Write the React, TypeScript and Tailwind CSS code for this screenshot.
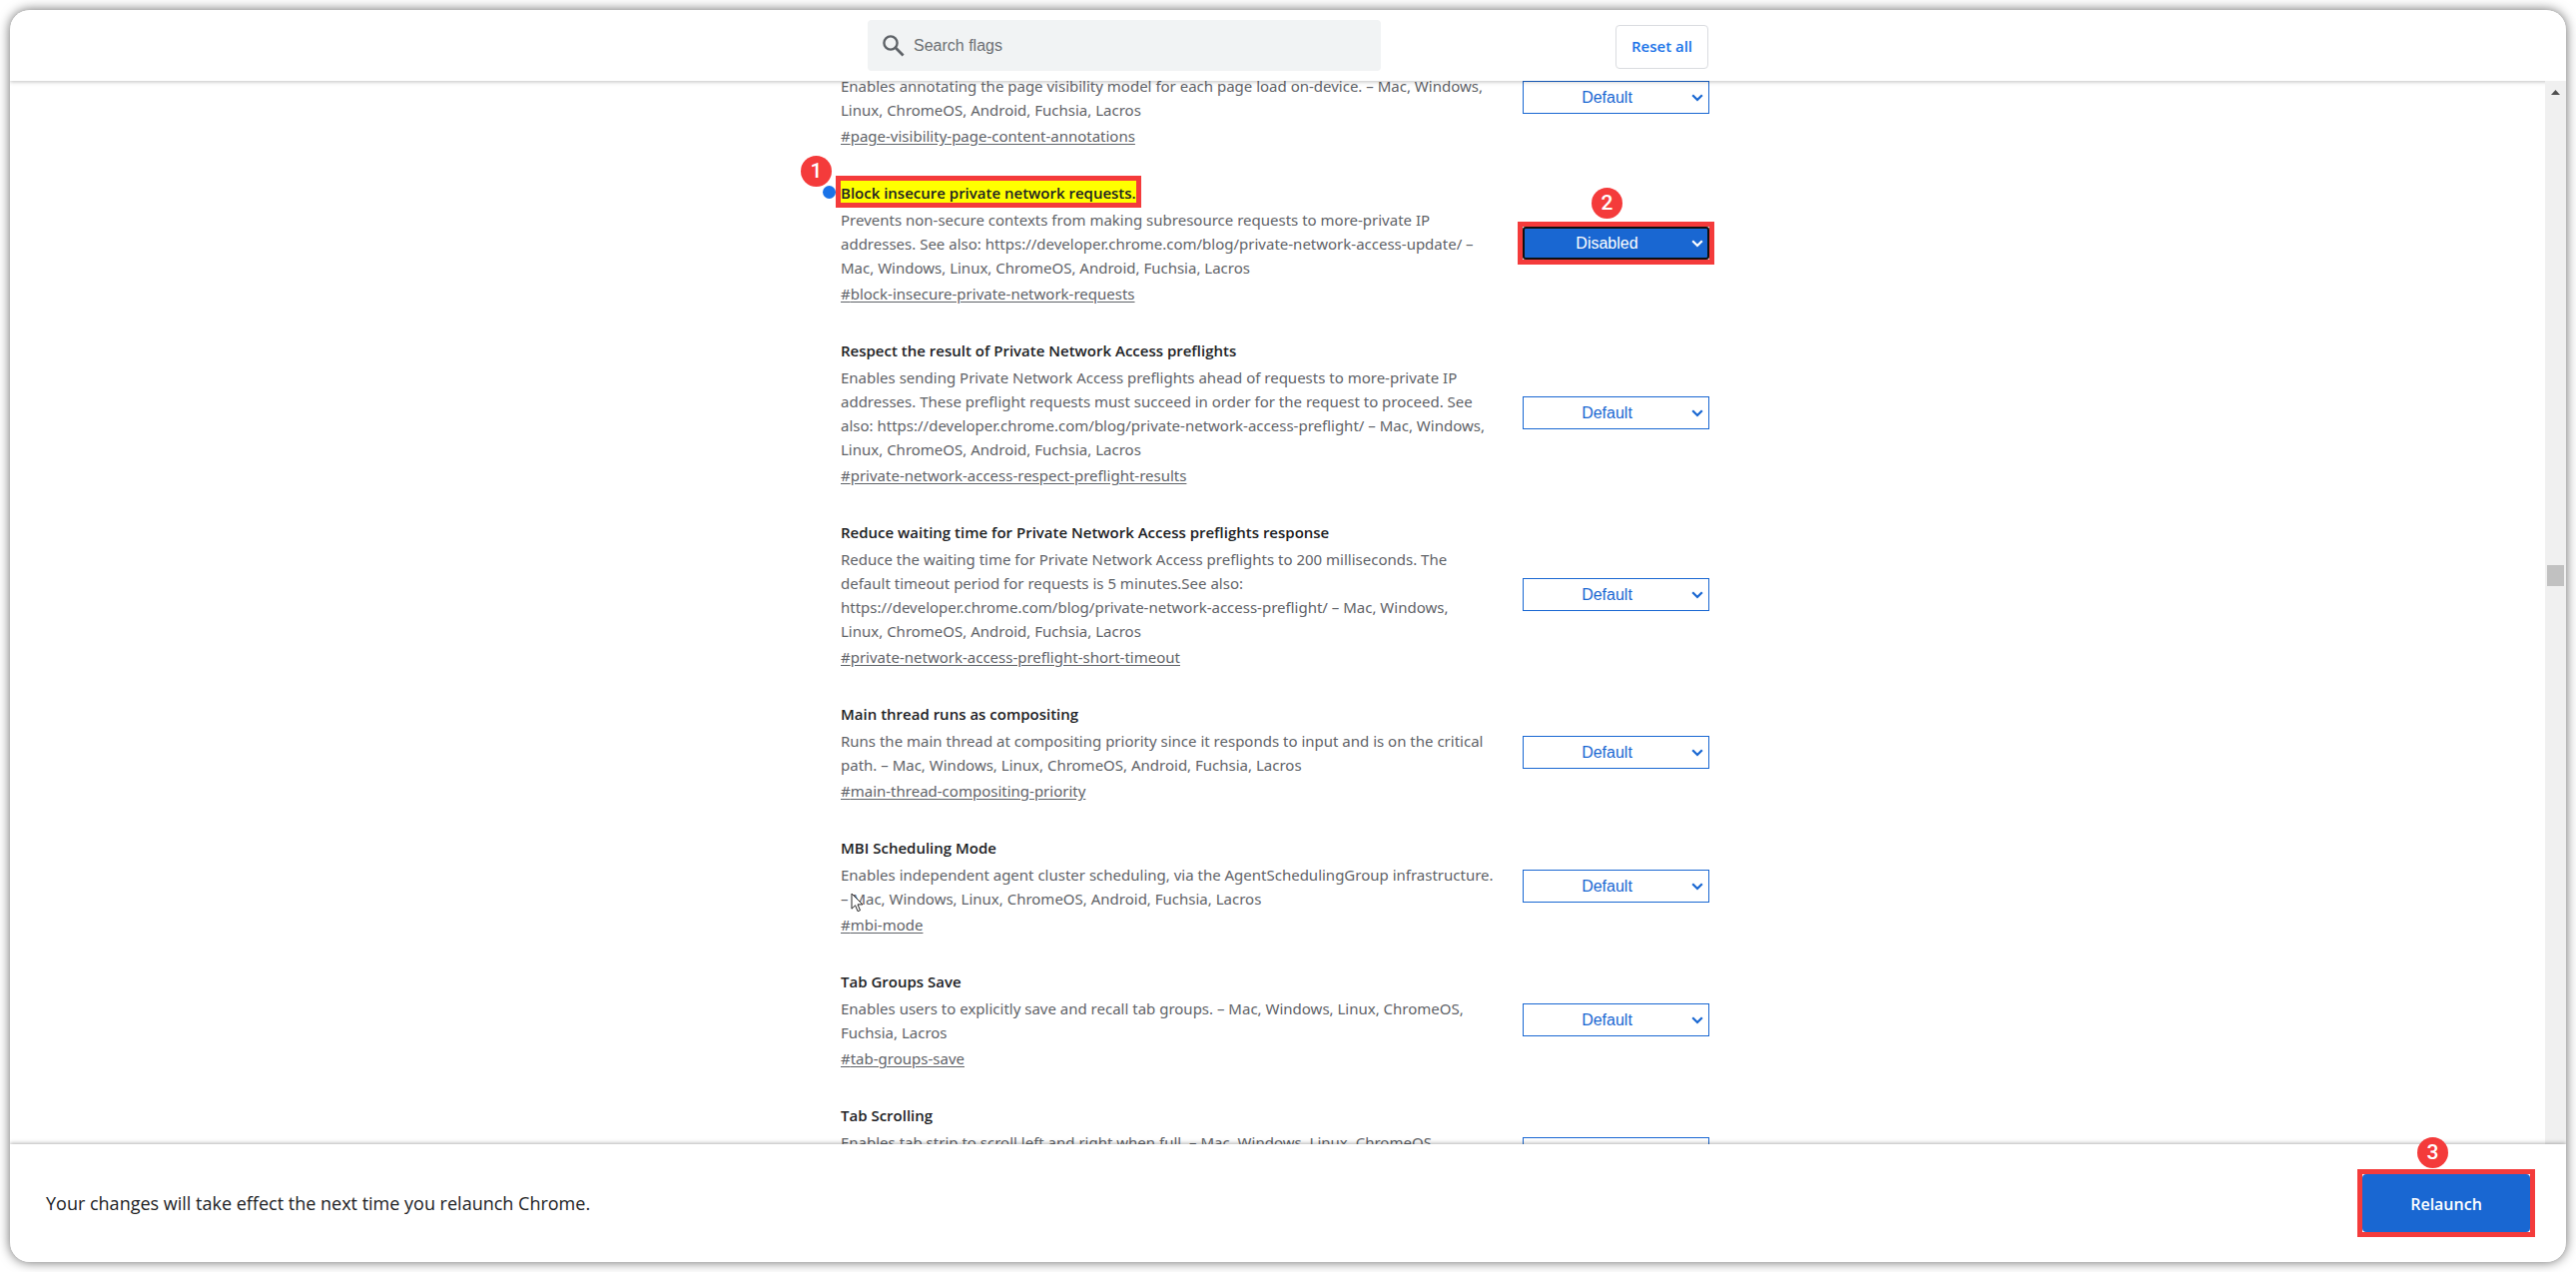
import React from "react";

type Flag = {
  id: string;
  title?: string;
  lines: string[];
  disabled?: boolean;
  pointer?: boolean;
};

const flags: Flag[] = [
  {
    id: "page-visibility-page-content-annotations",
    lines: [
      "Enables annotating the page visibility model for each page load on-device. – Mac, Windows,",
      "Linux, ChromeOS, Android, Fuchsia, Lacros",
    ],
  },
  {
    id: "block-insecure-private-network-requests",
    title: "Block insecure private network requests.",
    lines: [
      "Prevents non-secure contexts from making subresource requests to more-private IP",
      "addresses. See also: https://developer.chrome.com/blog/private-network-access-update/ –",
      "Mac, Windows, Linux, ChromeOS, Android, Fuchsia, Lacros",
    ],
    disabled: true,
  },
  {
    id: "private-network-access-respect-preflight-results",
    title: "Respect the result of Private Network Access preflights",
    lines: [
      "Enables sending Private Network Access preflights ahead of requests to more-private IP",
      "addresses. These preflight requests must succeed in order for the request to proceed. See",
      "also: https://developer.chrome.com/blog/private-network-access-preflight/ – Mac, Windows,",
      "Linux, ChromeOS, Android, Fuchsia, Lacros",
    ],
  },
  {
    id: "private-network-access-preflight-short-timeout",
    title: "Reduce waiting time for Private Network Access preflights response",
    lines: [
      "Reduce the waiting time for Private Network Access preflights to 200 milliseconds. The",
      "default timeout period for requests is 5 minutes.See also:",
      "https://developer.chrome.com/blog/private-network-access-preflight/ – Mac, Windows,",
      "Linux, ChromeOS, Android, Fuchsia, Lacros",
    ],
  },
  {
    id: "main-thread-compositing-priority",
    title: "Main thread runs as compositing",
    lines: [
      "Runs the main thread at compositing priority since it responds to input and is on the critical",
      "path. – Mac, Windows, Linux, ChromeOS, Android, Fuchsia, Lacros",
    ],
  },
  {
    id: "mbi-mode",
    title: "MBI Scheduling Mode",
    lines: [
      "Enables independent agent cluster scheduling, via the AgentSchedulingGroup infrastructure.",
      "– Mac, Windows, Linux, ChromeOS, Android, Fuchsia, Lacros",
    ],
    pointer: true,
  },
  {
    id: "tab-groups-save",
    title: "Tab Groups Save",
    lines: [
      "Enables users to explicitly save and recall tab groups. – Mac, Windows, Linux, ChromeOS,",
      "Fuchsia, Lacros",
    ],
  },
  {
    id: "scrollable-tabstrip",
    title: "Tab Scrolling",
    lines: [
      "Enables tab strip to scroll left and right when full. – Mac, Windows, Linux, ChromeOS,",
      "Fuchsia, Lacros",
    ],
  },
];

function Badge({ n, className }: { n: number; className: string }) {
  return (
    <span
      className={`absolute flex size-[31px] items-center justify-center rounded-full bg-[#f43b3b] font-['Roboto',sans-serif] text-[21px] leading-none font-medium text-white ${className}`}
    >
      {n}
    </span>
  );
}

function Outline() {
  return <span className="pointer-events-none absolute -inset-[5px] border-5 border-[#f43b3b]" />;
}

function Pointer() {
  return (
    <svg className="absolute top-[30px] left-[10px] h-[20px] w-[13px]" viewBox="0 0 13 20" aria-hidden="true">
      <path
        d="M1 1v15.2l3.6-3.4 2.5 5.9 2.4-1-2.5-5.8h5z"
        fill="#fff"
        stroke="#222"
        strokeWidth="1"
        strokeLinejoin="miter"
      />
    </svg>
  );
}

function StateSelect({ flag }: { flag: Flag }) {
  return (
    <div className="relative w-[187px] shrink-0">
      <select
        id={`state-${flag.id}`}
        aria-label={flag.title ?? flag.id}
        defaultValue={flag.disabled ? "Disabled" : "Default"}
        className={`block h-[33px] w-full appearance-none pr-[18px] font-['Liberation_Sans',Arial,sans-serif] text-[16px] outline-none [text-align-last:center] ${
          flag.disabled
            ? "rounded-[3px] border-2 border-[#101010] bg-[#1967d2] text-white"
            : "border border-[#1967d2] bg-white text-[#1967d2]"
        }`}
      >
        <option>Default</option>
        <option>Enabled</option>
        <option>Disabled</option>
      </select>
      <svg
        className={`pointer-events-none absolute top-[13px] right-[6px] h-[8px] w-[12px] ${
          flag.disabled ? "text-white" : "text-[#1967d2]"
        }`}
        viewBox="0 0 12 8"
        aria-hidden="true"
      >
        <path d="M1.2 1.2L6 6l4.8-4.8" fill="none" stroke="currentColor" strokeWidth="2.2" />
      </svg>
      {flag.disabled && (
        <>
          <Outline />
          <Badge n={2} className="-top-[39px] left-[69px]" />
        </>
      )}
    </div>
  );
}

function FlagTitle({ flag }: { flag: Flag }) {
  if (!flag.title) {
    return <div className="h-6" />;
  }
  return (
    <h2 className="font-['Open_Sans',sans-serif] text-[15px] leading-6 font-semibold text-[#202124]">
      {flag.disabled ? (
        <span className="relative inline-block">
          <span className="absolute top-[5px] -left-[18px] size-[13px] rounded-full bg-[#1a73e8]" />
          <mark className="-mx-px block h-[22px] bg-[#ffff00] px-px leading-[24px] text-[#202124]">{flag.title}</mark>
          <Outline />
          <Badge n={1} className="-top-[25px] -left-[40px]" />
        </span>
      ) : (
        flag.title
      )}
    </h2>
  );
}

function FlagRow({ flag }: { flag: Flag }) {
  return (
    <li className="flex items-center justify-between">
      <div className="min-w-0 whitespace-nowrap">
        <FlagTitle flag={flag} />
        <p className="relative mt-[3px] text-[15px] leading-6 text-[#5f6368]">
          {flag.lines.map((line) => (
            <span key={line} className="block">
              {line}
            </span>
          ))}
          {flag.pointer && <Pointer />}
        </p>
        <a
          href={`#${flag.id}`}
          className="mt-[2px] block w-fit text-[15px] leading-6 text-[#5f6368] underline underline-offset-2"
        >
          #{flag.id}
        </a>
      </div>
      <StateSelect flag={flag} />
    </li>
  );
}

export default function App() {
  return (
    <div className="h-screen bg-white p-[10px] font-['Noto_Sans','Open_Sans',sans-serif]">
      <div className="flex h-full flex-col overflow-hidden rounded-[20px] bg-white shadow-[0_0_12px_rgba(0,0,0,0.6)]">
        <header className="relative z-10 shrink-0 bg-white pr-[21px] shadow-[0_1px_4px_rgba(0,0,0,0.25)]">
          <div className="mx-auto flex h-[71px] w-[875px] max-w-full items-center justify-between pr-[6px] pl-[27px]">
            <label className="flex h-[51px] w-[514px] items-center gap-[9px] rounded-[4px] bg-[#f1f3f4] pl-[15px]">
              <svg className="size-[22px] shrink-0" viewBox="0 0 22 22" aria-hidden="true">
                <circle cx="8" cy="8" r="6.6" fill="none" stroke="#5f6368" strokeWidth="2.4" />
                <path d="M12.6 12.6l8 8" stroke="#5f6368" strokeWidth="2.8" />
              </svg>
              <input
                type="search"
                aria-label="Search flags"
                placeholder="Search flags"
                className="w-full bg-transparent font-['Liberation_Sans',Arial,sans-serif] text-[16px] outline-none placeholder:text-[#6b6f73]"
              />
            </label>
            <button
              type="button"
              className="mt-[2px] h-[44px] w-[93px] rounded-[4px] border border-[#dadce0] bg-white font-['Open_Sans',sans-serif] text-[15px] font-semibold text-[#1a73e8]"
            >
              Reset all
            </button>
          </div>
        </header>

        <div className="flex min-h-0 flex-1">
          <main className="min-w-0 flex-1 overflow-hidden">
            <ul className="mx-auto -mt-[34px] flex w-[875px] max-w-full flex-col gap-[33px] pr-[5px]">
              {flags.map((flag) => (
                <FlagRow key={flag.id} flag={flag} />
              ))}
            </ul>
          </main>
          <div className="relative z-20 flex w-[21px] flex-col items-center bg-[#f0f0f0]" aria-hidden="true">
            <svg className="mt-[9px] h-[5px] w-[9px]" viewBox="0 0 9 5">
              <path d="M0 5h9L4.5 0z" fill="#505050" />
            </svg>
            <div className="mt-[471px] h-[21px] w-[17px] bg-[#c1c1c1]" />
          </div>
        </div>

        <footer className="relative z-30 flex h-[118px] shrink-0 items-center justify-between bg-white px-9 shadow-[0_-1px_4px_rgba(0,0,0,0.3)]">
          <p className="font-['Open_Sans',sans-serif] text-[18px] text-[#202124]">
            Your changes will take effect the next time you relaunch Chrome.
          </p>
          <div className="relative">
            <button
              type="button"
              className="block h-[58px] w-[168px] rounded-[4px] bg-[#1967d2] pt-[2px] font-['Open_Sans',sans-serif] text-[16px] font-semibold text-white"
            >
              Relaunch
            </button>
            <Outline />
            <Badge n={3} className="-top-[37px] left-[55px]" />
          </div>
        </footer>
      </div>
    </div>
  );
}
